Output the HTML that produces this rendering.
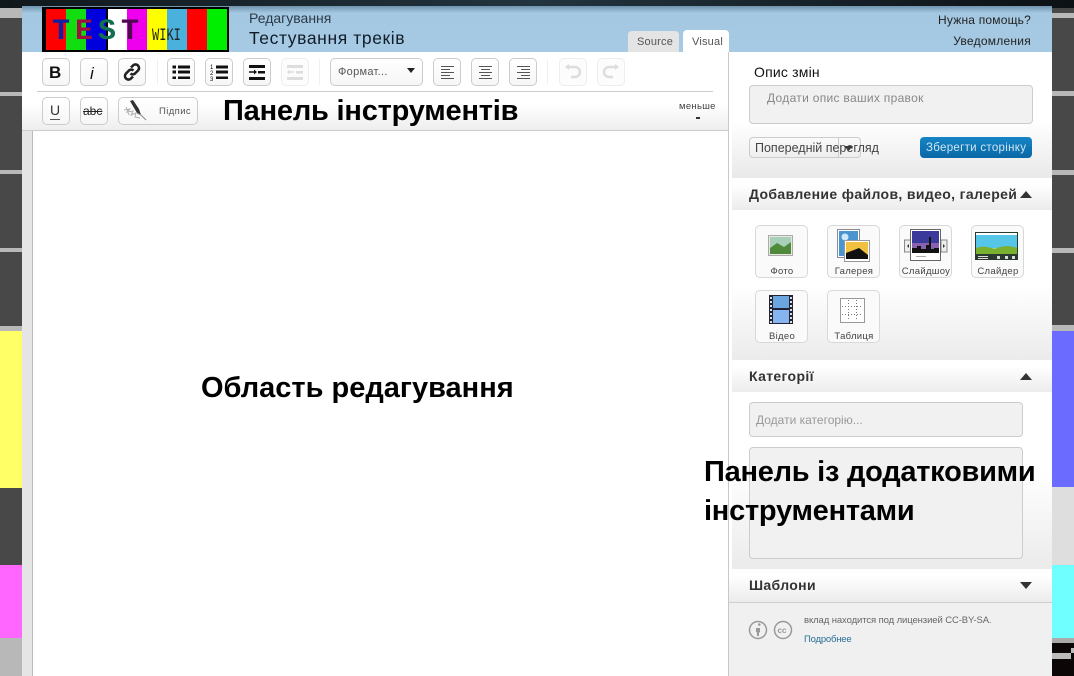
<!DOCTYPE html>
<html><head><meta charset="utf-8"><style>
html,body{margin:0;padding:0;width:1074px;height:676px;overflow:hidden;background:#484848}
body{position:relative;font-family:"Liberation Sans","Noto Sans CJK SC",sans-serif;color:#222}
div,span,svg{position:absolute;box-sizing:border-box}
.t{white-space:nowrap;line-height:1}
.b{width:28px;height:28px;border:1px solid #ccc;border-radius:5px;background:linear-gradient(#fff,#f6f6f6)}
.dis{border-color:#eee;background:#fcfcfc}
.tile{width:53px;height:53px;border:1px solid #d8d8d8;border-radius:5px;background:#fafafa}
.tl{font-size:9.5px;color:#444;letter-spacing:.3px;text-align:center;width:60px;left:-4px;top:40px;line-height:11px}
.hd{left:732px;width:320px;background:linear-gradient(#fff 20%,#ececec)}
.h{font-weight:bold;font-size:14px;color:#333;left:749px;letter-spacing:.35px}
.big{font-size:29px;color:#000;font-weight:bold}
.inp{background:#f1f1f1;border:1px solid #ccc;border-radius:4px}
.bar{background:#b8b8b8}
</style></head><body>
<!-- backdrop -->
<div style="left:0;top:0;width:1074px;height:8px;background:linear-gradient(90deg,#10181c,#22343f 50%,#0c1114)"></div>
<div class="bar" style="left:0;top:8px;width:22px;height:10px"></div>
<div class="bar" style="left:0;top:92px;width:22px;height:4px"></div>
<div class="bar" style="left:0;top:170px;width:22px;height:4px"></div>
<div class="bar" style="left:0;top:248px;width:22px;height:4px"></div>
<div class="bar" style="left:0;top:326px;width:22px;height:5px"></div>
<div style="left:0;top:331px;width:22px;height:157px;background:#ffff66"></div>
<div style="left:0;top:565px;width:22px;height:73px;background:#ff66ff"></div>
<div style="left:0;top:638px;width:22px;height:38px;background:#b8b8b8"></div>
<div class="bar" style="left:1052px;top:13px;width:22px;height:5px"></div>
<div class="bar" style="left:1052px;top:91px;width:22px;height:5px"></div>
<div class="bar" style="left:1052px;top:170px;width:22px;height:5px"></div>
<div class="bar" style="left:1052px;top:248px;width:22px;height:5px"></div>
<div class="bar" style="left:1052px;top:325px;width:22px;height:6px"></div>
<div style="left:1052px;top:331px;width:22px;height:156px;background:#6b6bff"></div>
<div style="left:1052px;top:487px;width:22px;height:78px;background:#dedede"></div>
<div style="left:1052px;top:565px;width:22px;height:73px;background:#70ffff"></div>
<div style="left:1052px;top:638px;width:22px;height:5px;background:#aaa"></div>
<div style="left:1052px;top:643px;width:22px;height:33px;background:#0c0606"></div>
<div style="left:1052px;top:653px;width:19px;height:6px;background:#bbb"></div>
<div style="left:1071px;top:648px;width:3px;height:5px;background:#bbb"></div>

<!-- header -->
<div style="left:22px;top:6px;width:1030px;height:46px;background:linear-gradient(#6f93ad,#a4c8e2 7px,#a6cae3)"></div>
<div style="left:42px;top:7px;width:187px;height:45px;background:#000"></div>
<div style="left:46px;top:9px;width:181px;height:41px;background:linear-gradient(90deg,#f00 0 20px,#1d1 20px 40px,#00d 40px 60px,#000 60px 62px,#fff 62px 81px,#e0e 81px 101px,#ff0 101px 121px,#4ab0dc 121px 141px,#f00 141px 161px,#0e0 161px)"></div>
<div class="t" style="left:52px;top:15px;font:bold 30px 'Liberation Mono',monospace;letter-spacing:5px"><span style="position:static;color:#1020a0">T</span><span style="position:static;color:#a01040">E</span><span style="position:static;color:#107050">S</span><span style="position:static;color:#500850">T</span></div>
<div class="t" style="left:152px;top:26px;font:14px 'Liberation Mono',monospace;color:#222;transform:scaleX(.86) scaleY(1.25);transform-origin:left top">WIKI</div>
<div class="t" style="left:249px;top:11px;font-size:14px;color:#2a3a48">Редагування</div>
<div class="t" style="left:249px;top:30px;font-size:17.5px;color:#111c28;letter-spacing:.6px">Тестування треків</div>
<div class="t" style="right:43px;top:14px;font-size:12px;color:#222;letter-spacing:.2px">Нужна помощь?</div>
<div class="t" style="right:43px;top:35px;font-size:12px;color:#222;letter-spacing:.25px">Уведомления</div>
<div style="left:628px;top:31px;width:51px;height:22px;background:#e4e4e4;border-radius:4px 4px 0 0"></div>
<div class="t" style="left:637px;top:37px;font-size:11px;color:#555;letter-spacing:.2px">Source</div>
<div style="left:683px;top:30px;width:46px;height:23px;background:#fff;border-radius:4px 4px 0 0"></div>
<div class="t" style="left:692px;top:37px;font-size:11px;color:#555;letter-spacing:.2px">Visual</div>

<!-- toolbar -->
<div style="left:22px;top:52px;width:707px;height:40px;background:#fff"></div>
<div style="left:22px;top:92px;width:707px;height:39px;background:linear-gradient(#fff 30%,#eee);border-bottom:1px solid #ccc"></div>
<div style="left:37px;top:91px;width:676px;height:1px;background:#ccc"></div>
<div style="left:22px;top:131px;width:11px;height:545px;background:#e5e5e5;border-right:1px solid #bbb"></div>
<div style="left:33px;top:131px;width:695px;height:545px;background:#fff"></div>
<div style="left:728px;top:52px;width:1px;height:624px;background:#c8c8c8"></div>

<!-- row 1 -->
<div class="b" style="left:42px;top:58px"></div>
<div class="t" style="left:49px;top:64px;font-size:17px;font-weight:bold;color:#111">B</div>
<div class="b" style="left:80px;top:58px"></div>
<div class="t" style="left:90px;top:64px;font:italic 17px 'Liberation Sans',sans-serif;color:#111">i</div>
<div class="b" style="left:118px;top:58px"></div>
<svg style="left:118px;top:58px" width="28" height="28" viewBox="0 0 28 28" fill="none" stroke="#222" stroke-width="2.6"><path d="M13 9.5l2-2a3.3 3.3 0 0 1 5 5l-3 3a3.3 3.3 0 0 1-4.500 0"/><path d="M15 18.500l-2 2a3.300 3.300 0 0 1-5-5l3-3a3.300 3.300 0 0 1 4.500 0"/></svg>
<div style="left:157px;top:59px;width:1px;height:26px;background:#f0f0f0"></div>
<div class="b" style="left:167px;top:58px"></div>
<svg style="left:167px;top:58px" width="28" height="28" fill="#111"><path d="M5.500 7.500h3.500v3H5.500zM11 7.500h12v3H11zM5.500 12.500h3.500v3H5.500zM11 12.500h12v3H11zM5.500 18.500h3.500v2.500H5.500zM11 18.500h12v2.500H11z"/></svg>
<div class="b" style="left:205px;top:58px"></div>
<svg style="left:205px;top:58px" width="28" height="28" fill="#111"><path d="M11 7.500h12v3H11zM11 12.500h12v3H11zM11 18.500h12v2.500H11z"/><text x="5" y="11" font-size="6" font-family="Liberation Sans">1</text><text x="5" y="17" font-size="6" font-family="Liberation Sans">2</text><text x="5" y="23" font-size="6" font-family="Liberation Sans">3</text></svg>
<div class="b" style="left:243px;top:58px"></div>
<svg style="left:243px;top:58px" width="28" height="28" fill="#111"><path d="M6 7h16v3H6zM15 13h7v2.500h-7zM6 19h16v3H6zM6 13.300h5v-1.800l3 2.500-3 2.500v-1.800H6z"/></svg>
<div class="b dis" style="left:281px;top:58px"></div>
<svg style="left:281px;top:58px" width="28" height="28" fill="#ddd"><path d="M6 7h16v3H6zM15 13h7v2.500h-7zM6 19h16v3H6zM13 13.300H9v-1.800l-3 2.500 3 2.500v-1.800h4z"/></svg>
<div style="left:319px;top:59px;width:1px;height:26px;background:#f0f0f0"></div>
<div class="b" style="left:330px;top:58px;width:93px"></div>
<div class="t" style="left:338px;top:67px;font-size:11px;color:#555;letter-spacing:.3px">Формат...</div>
<svg style="left:406px;top:68px" width="10" height="6"><path d="M1 0h8L5 5z" fill="#222"/></svg>
<div class="b" style="left:433px;top:58px"></div>
<svg style="left:433px;top:58px" width="28" height="28" fill="#555"><path d="M8 8h13v1H8zM8 11h9v1H8zM8 14h13v1H8zM8 17h9v1H8zM8 20h13v1H8z"/></svg>
<div class="b" style="left:471px;top:58px"></div>
<svg style="left:471px;top:58px" width="28" height="28" fill="#555"><path d="M8 8h13v1H8zM10 11h9v1h-9zM8 14h13v1H8zM10 17h9v1h-9zM8 20h13v1H8z"/></svg>
<div class="b" style="left:509px;top:58px"></div>
<svg style="left:509px;top:58px" width="28" height="28" fill="#555"><path d="M8 8h13v1H8zM12 11h9v1h-9zM8 14h13v1H8zM12 17h9v1h-9zM8 20h13v1H8z"/></svg>
<div style="left:547px;top:59px;width:1px;height:26px;background:#f0f0f0"></div>
<div class="b dis" style="left:559px;top:58px"></div>
<svg style="left:559px;top:58px" width="28" height="28" fill="none" stroke="#ddd" stroke-width="2.500"><path d="M9 9h7a5 5 0 0 1 0 10h-4"/><path d="M6 9l4-3v6z" fill="#ddd" stroke="none"/></svg>
<div class="b dis" style="left:597px;top:58px"></div>
<svg style="left:597px;top:58px" width="28" height="28" fill="none" stroke="#ddd" stroke-width="2.500"><path d="M19 9h-7a5 5 0 0 0 0 10h4"/><path d="M22 9l-4-3v6z" fill="#ddd" stroke="none"/></svg>

<!-- row 2 -->
<div class="b" style="left:42px;top:97px"></div>
<div class="t" style="left:50px;top:103px;font-size:14px;color:#333;border-bottom:1px solid #555;padding-bottom:2px">U</div>
<div class="b" style="left:80px;top:97px"></div>
<div class="t" style="left:83px;top:105px;font-size:12px;color:#222;text-decoration:line-through">abc</div>
<div class="b" style="left:118px;top:97px;width:80px"></div>
<svg style="left:122px;top:99px" width="28" height="26" fill="none"><path d="M8 2l3-1 6 9 2 6-4-2z" fill="#333"/><path d="M15 14l4 2 5 5" stroke="#888"/><path d="M2 11l6-1-3 3 6-1-2 4 5-2-1 4 5 1M4 8l3 8" stroke="#b0b0b0"/></svg>
<div class="t" style="left:159px;top:107px;font-size:9.500px;color:#555;letter-spacing:.4px">Підпис</div>
<div class="t big" style="left:223px;top:97px;letter-spacing:-.2px">Панель інструментів</div>
<div class="t" style="left:679px;top:102px;font-size:9.500px;color:#444;letter-spacing:.3px">меньше</div>
<div style="left:696px;top:117px;width:4px;height:2px;background:#333"></div>

<div class="t big" style="left:201px;top:374px">Область редагування</div>

<!-- right panel -->
<div style="left:729px;top:52px;width:323px;height:624px;background:#fff"></div>
<div style="left:732px;top:52px;width:320px;height:126px;background:linear-gradient(#fff 55%,#e9e9e9)"></div>
<div class="t" style="left:754px;top:65px;font-size:14px;color:#111;letter-spacing:.2px">Опис змін</div>
<div class="inp" style="left:749px;top:85px;width:284px;height:39px"></div>
<div class="t" style="left:767px;top:92px;font-size:12px;color:#888;letter-spacing:.3px">Додати опис ваших правок</div>
<div class="inp" style="left:749px;top:137px;width:112px;height:21px;background:linear-gradient(#fafafa,#eee)"></div>
<div style="left:838px;top:137px;width:1px;height:21px;background:#ccc"></div>
<svg style="left:844px;top:146px" width="9" height="5"><path d="M0 0h9L4.500 5z" fill="#333"/></svg>
<div class="t" style="left:755px;top:142px;font-size:12.500px;color:#444">Попередній перегляд</div>
<div style="left:920px;top:137px;width:112px;height:21px;background:linear-gradient(#1585c6,#0a67a5);border-radius:4px"></div>
<div class="t" style="left:926px;top:143px;font-size:11.500px;color:#cfe6f5;letter-spacing:.3px">Зберегти сторінку</div>

<div class="hd" style="top:178px;height:32px"></div>
<div class="t h" style="top:187px;letter-spacing:.36px">Добавление файлов, видео, галерей</div>
<svg style="left:1020px;top:191px" width="12" height="7"><path d="M0 7h12L6 0z" fill="#333"/></svg>

<div style="left:732px;top:210px;width:320px;height:150px;background:linear-gradient(#fff 50%,#ebebeb)"></div>

<div class="tile" style="left:755px;top:225px"><div class="tl">Фото</div>
<svg style="left:12px;top:9px" width="26" height="22"><rect x=".5" y=".5" width="24" height="20" fill="#e8e8e0" stroke="#aaa"/><rect x="2" y="2" width="21" height="17" fill="#a8d0b8"/><path d="M2 19V13l7-5 7 4 7-5v12z" fill="#4f8a3a"/></svg></div>
<div class="tile" style="left:827px;top:225px"><div class="tl">Галерея</div>
<svg style="left:9px;top:3px" width="34" height="34"><rect x=".5" y=".5" width="22" height="28" fill="#fff" stroke="#889"/><rect x="2" y="2" width="19" height="25" fill="#4a94d0"/><circle cx="8" cy="8" r="3.500" fill="#cde8f8"/><rect x="7.500" y="11.500" width="25" height="21" fill="#fff" stroke="#999"/><rect x="9" y="13" width="22" height="17" fill="#f0c040"/><path d="M9 30v-6l8-3 5-2 9 7v4z" fill="#111"/></svg></div>
<div class="tile" style="left:899px;top:225px"><div class="tl">Слайдшоу</div>
<svg style="left:4px;top:3px" width="44" height="34"><rect x=".5" y="11" width="6" height="12" fill="#eee" stroke="#888"/><rect x="37" y="11" width="6" height="12" fill="#eee" stroke="#888"/><path d="M5 15v4l-2-2z" fill="#333"/><path d="M39 15v4l2-2z" fill="#333"/><rect x="6.500" y=".5" width="30" height="31" fill="#fff" stroke="#666"/><rect x="8" y="2" width="27" height="22" fill="#3a3a9a"/><rect x="8" y="14" width="27" height="6" fill="#8a60b0"/><path d="M8 24v-5h5v-2h4v3h5v-4h3v-8h2v12h3v-1h5v5z" fill="#111"/><path d="M12 27.500h10" stroke="#aaa"/></svg></div>
<div class="tile" style="left:971px;top:225px"><div class="tl">Слайдер</div>
<svg style="left:3px;top:6px" width="44" height="29"><rect width="43" height="28" fill="#2a3a30"/><rect x="1" y="1" width="41" height="21" fill="#fff"/><rect x="1" y="3" width="41" height="13" fill="#55c5e8"/><path d="M1 23v-7c10-4 16 2 21 0s13-3 20 0v7z" fill="#7ab030"/><rect y="22" width="43" height="6" fill="#2a3a30"/><path d="M3 24h10v1H3zM3 26h10v1H3zM22 24h3v3h-3zM30 24h3v3h-3zM37 24h3v3h-3z" fill="#ddd"/></svg></div>
<div class="tile" style="left:755px;top:290px"><div class="tl">Відео</div>
<svg style="left:13px;top:4px" width="25" height="30"><rect width="24" height="29" fill="#223"/><rect x="4" y="1" width="16" height="12" fill="#6ba6e0"/><rect x="4" y="15" width="16" height="13" fill="#86b4ee"/><path d="M1 2h2v2H1zM1 6h2v2H1zM1 10h2v2H1zM1 14h2v2H1zM1 18h2v2H1zM1 22h2v2H1zM1 26h2v2H1zM21 2h2v2h-2zM21 6h2v2h-2zM21 10h2v2h-2zM21 14h2v2h-2zM21 18h2v2h-2zM21 22h2v2h-2zM21 26h2v2h-2z" fill="#ddd"/></svg></div>
<div class="tile" style="left:827px;top:290px"><div class="tl">Таблиця</div>
<svg style="left:12px;top:7px" width="26" height="26" fill="none"><rect x=".5" y=".5" width="24" height="24" fill="#fff" stroke="#999"/><path d="M2 8.500h21M2 16.500h21M8.500 2v21M16.500 2v21" stroke="#777" stroke-dasharray="1 2"/></svg></div>

<div class="hd" style="top:360px;height:32px"></div>
<div class="t h" style="top:369px">Категорії</div>
<svg style="left:1020px;top:373px" width="12" height="7"><path d="M0 7h12L6 0z" fill="#333"/></svg>
<div style="left:732px;top:392px;width:320px;height:177px;background:linear-gradient(#fff 45%,#ebebeb)"></div>
<div class="inp" style="left:749px;top:402px;width:274px;height:35px"></div>
<div class="t" style="left:756px;top:414px;font-size:12px;color:#999">Додати категорію...</div>
<div class="inp" style="left:749px;top:447px;width:274px;height:112px"></div>
<div class="t big" style="left:704px;top:453px;line-height:39px;white-space:pre;letter-spacing:-.25px">Панель із додатковими
інструментами</div>

<div class="hd" style="left:729px;width:323px;top:569px;height:34px;border-bottom:1px solid #d0d0d0"></div>
<div class="t h" style="top:578px">Шаблони</div>
<svg style="left:1020px;top:582px" width="12" height="7"><path d="M0 0h12L6 7z" fill="#333"/></svg>
<div style="left:729px;top:603px;width:323px;height:73px;background:#f0f0f0"></div>
<svg style="left:748px;top:620px" width="46" height="20" fill="none" stroke="#999" stroke-width="1.500"><circle cx="10" cy="10" r="8.500"/><circle cx="35" cy="10" r="8.500"/><path d="M10 4.500a1.300 1.300 0 1 1 0 .1zM8 8h4v4l-1 .5V16H9v-3.500L8 12z" fill="#999" stroke="none"/><text x="29.500" y="13" font-size="8" font-family="Liberation Sans" font-weight="bold" fill="#999" stroke="none">cc</text></svg>
<div class="t" style="left:804px;top:616px;font-size:9.500px;color:#666;letter-spacing:-.1px">вклад находится под лицензией CC-BY-SA.</div>
<div class="t" style="left:804px;top:635px;font-size:9.500px;color:#2a6f96;letter-spacing:-.2px">Подробнее</div>
</body></html>
